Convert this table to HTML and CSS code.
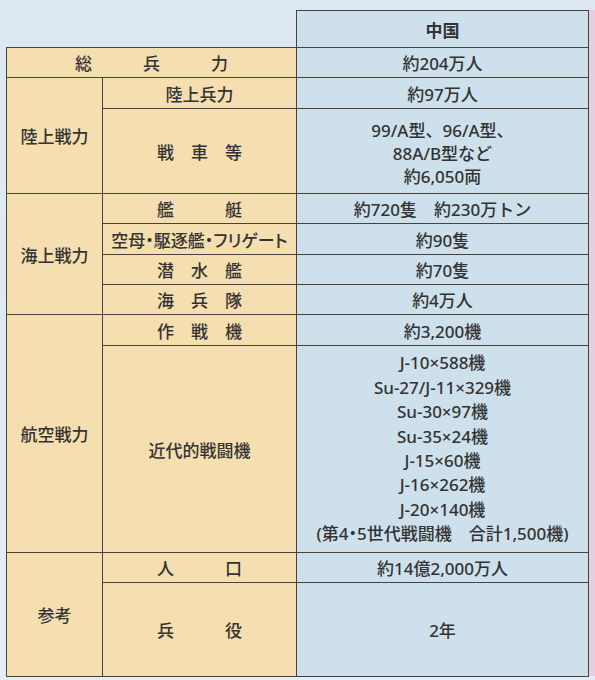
FILE: index.html
```html
<!DOCTYPE html>
<html lang="ja">
<head>
<meta charset="utf-8">
<title>中国の軍事力</title>
<link rel="stylesheet" href="styles.css">
</head>
<body>
<div class="page">
  <div class="main">
    <div class="head">
      <div class="head-spacer"></div>
      <div class="head-cell">中国</div>
    </div>
    <div class="grid">
      <div class="lab c12 r1"><span class="sp3">総兵力</span></div>
      <div class="val">約204万人</div>

      <div class="lab c1 r2-3">陸上戦力</div>
      <div class="lab">陸上兵力</div>
      <div class="val">約97万人</div>
      <div class="lab"><span class="sp1">戦車等</span></div>
      <div class="val"><p class="multi">99/A型、96/A型、<br>88A/B型など<br>約6,050両</p></div>

      <div class="lab c1 r4-7">海上戦力</div>
      <div class="lab"><span class="sp3">艦艇</span></div>
      <div class="val">約720隻　約230万トン</div>
      <div class="lab narrow">空母・駆逐艦・フリゲート</div>
      <div class="val">約90隻</div>
      <div class="lab"><span class="sp1">潜水艦</span></div>
      <div class="val">約70隻</div>
      <div class="lab"><span class="sp1">海兵隊</span></div>
      <div class="val">約4万人</div>

      <div class="lab c1 r8-9">航空戦力</div>
      <div class="lab"><span class="sp1">作戦機</span></div>
      <div class="val">約3,200機</div>
      <div class="lab">近代的戦闘機</div>
      <div class="val"><p class="list">J-10×588機<br>Su-27/J-11×329機<br>Su-30×97機<br>Su-35×24機<br>J-15×60機<br>J-16×262機<br>J-20×140機<br><span class="narrow">(第4・5世代戦闘機　合計1,500機)</span></p></div>

      <div class="lab c1 r10-11">参考</div>
      <div class="lab"><span class="sp3">人口</span></div>
      <div class="val">約14億2,000万人</div>
      <div class="lab"><span class="sp3">兵役</span></div>
      <div class="val">2年</div>
    </div>
  </div>
  <div class="next"></div>
</div>
</body>
</html>
```

FILE: styles.css
```css
html, body {
  margin: 0;
  padding: 0;
}
body {
  width: 595px;
  height: 680px;
  overflow: hidden;
  background: linear-gradient(#dce7f2, #e4edf6);
  font-family: "Noto Sans", "Noto Sans CJK JP", sans-serif;
  font-size: 17px;
  font-weight: 500;
  color: #333;
}
.page {
  display: flex;
  padding: 10px 0 0 6px;
  height: 666px;
}
.main {
  width: 583px;
  flex: none;
}
.next {
  flex: 1;
  background: #e6cfe1;
}
.head {
  display: flex;
  height: 37px;
}
.head-spacer {
  width: 290px;
}
.head-cell {
  flex: 1;
  border: 1px solid #48423c;
  border-bottom: none;
  background: #cde0ec;
  font-weight: bold;
  display: flex;
  align-items: center;
  justify-content: center;
}
.grid {
  display: grid;
  grid-template-columns: 95px 193px 291px;
  grid-template-rows: 29px 30px 84px 29px 30px 29px 29px 30px 206px 29px 93px;
  gap: 1px;
  padding: 1px;
  background: #48423c;
}
.grid > div {
  display: flex;
  align-items: center;
  justify-content: center;
  text-align: center;
  white-space: nowrap;
}
.lab {
  background: #f5deb0;
}
.val {
  background: #cde0ec;
}
.c12 { grid-column: 1 / 3; }
.c1 { grid-column: 1; }
.r2-3 { grid-row: 2 / 4; }
.r4-7 { grid-row: 4 / 8; }
.r8-9 { grid-row: 8 / 10; }
.r10-11 { grid-row: 10 / 12; }
.sp1 {
  letter-spacing: 1em;
  padding-left: 1em;
}
.sp3 {
  letter-spacing: 3em;
  padding-left: 3em;
}
.narrow {
  font-feature-settings: "palt";
}
.multi,
.list {
  margin: 0;
}
.multi {
  line-height: 23px;
  padding-top: 4px;
}
.list {
  line-height: 24.4px;
}
```
